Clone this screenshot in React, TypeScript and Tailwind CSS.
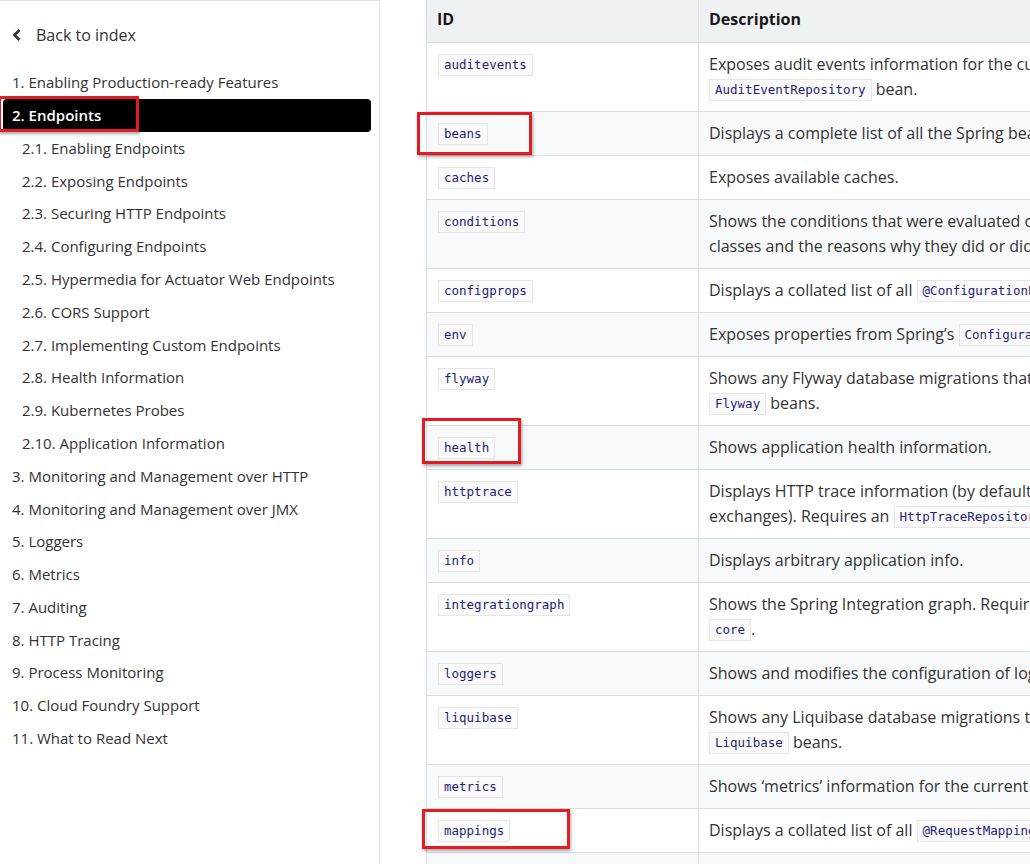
import React from 'react';

const nav = [
  { label: '1. Enabling Production-ready Features', sub: false },
  { label: '2. Endpoints', sub: false, active: true },
  { label: '2.1. Enabling Endpoints', sub: true },
  { label: '2.2. Exposing Endpoints', sub: true },
  { label: '2.3. Securing HTTP Endpoints', sub: true },
  { label: '2.4. Configuring Endpoints', sub: true },
  { label: '2.5. Hypermedia for Actuator Web Endpoints', sub: true },
  { label: '2.6. CORS Support', sub: true },
  { label: '2.7. Implementing Custom Endpoints', sub: true },
  { label: '2.8. Health Information', sub: true },
  { label: '2.9. Kubernetes Probes', sub: true },
  { label: '2.10. Application Information', sub: true },
  { label: '3. Monitoring and Management over HTTP', sub: false },
  { label: '4. Monitoring and Management over JMX', sub: false },
  { label: '5. Loggers', sub: false },
  { label: '6. Metrics', sub: false },
  { label: '7. Auditing', sub: false },
  { label: '8. HTTP Tracing', sub: false },
  { label: '9. Process Monitoring', sub: false },
  { label: '10. Cloud Foundry Support', sub: false },
  { label: '11. What to Read Next', sub: false },
];

const Code = ({ children }: { children: React.ReactNode }) => (
  <code className="inline-block border border-[#e6e6e6] bg-[#fafafa] px-[5px] leading-[20px] text-[12.5px] text-[#1e1e78] [font-family:'DejaVu_Sans_Mono',monospace] align-middle">
    {children}
  </code>
);

const rows: { id: string; desc: React.ReactNode }[] = [
  {
    id: 'auditevents',
    desc: (
      <>
        Exposes audit events information for the current application. Requires an
        <br />
        <Code>AuditEventRepository</Code> bean.
      </>
    ),
  },
  { id: 'beans', desc: 'Displays a complete list of all the Spring beans in your application.' },
  { id: 'caches', desc: 'Exposes available caches.' },
  {
    id: 'conditions',
    desc: (
      <>
        Shows the conditions that were evaluated on configuration and auto-configuration
        <br />
        classes and the reasons why they did or did not match.
      </>
    ),
  },
  {
    id: 'configprops',
    desc: (
      <>
        Displays a collated list of all <Code>@ConfigurationProperties</Code>.
      </>
    ),
  },
  {
    id: 'env',
    desc: (
      <>
        Exposes properties from Spring’s <Code>ConfigurableEnvironment</Code>.
      </>
    ),
  },
  {
    id: 'flyway',
    desc: (
      <>
        Shows any Flyway database migrations that have been applied. Requires one or more
        <br />
        <Code>Flyway</Code> beans.
      </>
    ),
  },
  { id: 'health', desc: 'Shows application health information.' },
  {
    id: 'httptrace',
    desc: (
      <>
        Displays HTTP trace information (by default, the last 100 HTTP request-response
        <br />
        exchanges). Requires an <Code>HttpTraceRepository</Code> bean.
      </>
    ),
  },
  { id: 'info', desc: 'Displays arbitrary application info.' },
  {
    id: 'integrationgraph',
    desc: (
      <>
        Shows the Spring Integration graph. Requires a dependency on <Code>spring-integration-</Code>
        <br />
        <Code>core</Code>.
      </>
    ),
  },
  { id: 'loggers', desc: 'Shows and modifies the configuration of loggers in the application.' },
  {
    id: 'liquibase',
    desc: (
      <>
        Shows any Liquibase database migrations that have been applied. Requires one or more
        <br />
        <Code>Liquibase</Code> beans.
      </>
    ),
  },
  { id: 'metrics', desc: 'Shows ‘metrics’ information for the current application.' },
  {
    id: 'mappings',
    desc: (
      <>
        Displays a collated list of all <Code>@RequestMapping</Code> paths.
      </>
    ),
  },
  { id: 'scheduledtasks', desc: 'Displays the scheduled tasks in your application.' },
];

export default function App() {
  return (
    <div className="relative flex h-[864px] w-[1030px] overflow-hidden bg-white text-[#333] [font-family:'Open_Sans',sans-serif]">
      {/* sidebar */}
      <aside className="w-[380px] shrink-0 border-r border-t border-[#e3e3e3] pl-[3px] pr-[8px]">
        <div className="flex h-[50px] items-center gap-[13px] pl-[8px] pt-[18px] text-[16px]">
          <svg width="12" height="14" viewBox="0 0 12 14" className="text-[#333]">
            <path d="M8.5 2 L3.5 7 L8.5 12" fill="none" stroke="currentColor" strokeWidth="2.6" />
          </svg>
          <span>Back to index</span>
        </div>
        <ul className="mt-[15px] text-[15px]">
          {nav.map((n) => (
            <li
              key={n.label}
              className={`flex h-[32.8px] items-center rounded-[4px] ${n.sub ? 'pl-[19px]' : 'pl-[9px]'} ${
                n.active ? 'bg-black font-semibold text-white' : ''
              }`}
            >
              {n.label}
            </li>
          ))}
        </ul>
      </aside>

      {/* content */}
      <main className="flex-1 pl-[46px]">
        <table className="w-[1200px] table-fixed border-collapse text-[16px] leading-[25px]">
          <colgroup>
            <col className="w-[272px]" />
            <col />
          </colgroup>
          <thead>
            <tr className="h-[42px] bg-[#eef2f3]">
              <th className="border border-t-0 border-[#d9dee1] px-[10px] pb-[2px] text-left font-bold text-[#191919]">ID</th>
              <th className="border border-t-0 border-[#d9dee1] px-[10px] pb-[2px] text-left font-bold text-[#191919]">Description</th>
            </tr>
          </thead>
          <tbody>
            {rows.map((r, i) => (
              <tr key={r.id} className={i % 2 === 1 ? 'bg-[#f7f9fa]' : 'bg-white'}>
                <td className="border border-[#d9dee1] px-[11px] py-[9px] align-top">
                  <Code>{r.id}</Code>
                </td>
                <td className="whitespace-nowrap border border-[#d9dee1] px-[10px] py-[9px] align-top">{r.desc}</td>
              </tr>
            ))}
          </tbody>
        </table>
      </main>

      {/* annotation boxes */}
      <div className="absolute left-[-2px] top-[96px] h-[36px] w-[141px] border-[3px] border-[#e31b23] shadow-[1px_2px_3px_rgba(0,0,0,0.35)]" />
      <div className="absolute left-[417px] top-[112px] h-[43px] w-[115px] border-[3px] border-[#e31b23] shadow-[1px_2px_3px_rgba(0,0,0,0.35)]" />
      <div className="absolute left-[422px] top-[418px] h-[46px] w-[99px] border-[3px] border-[#e31b23] shadow-[1px_2px_3px_rgba(0,0,0,0.35)]" />
      <div className="absolute left-[422px] top-[809px] h-[40px] w-[148px] border-[3px] border-[#e31b23] shadow-[1px_2px_3px_rgba(0,0,0,0.35)]" />
    </div>
  );
}
